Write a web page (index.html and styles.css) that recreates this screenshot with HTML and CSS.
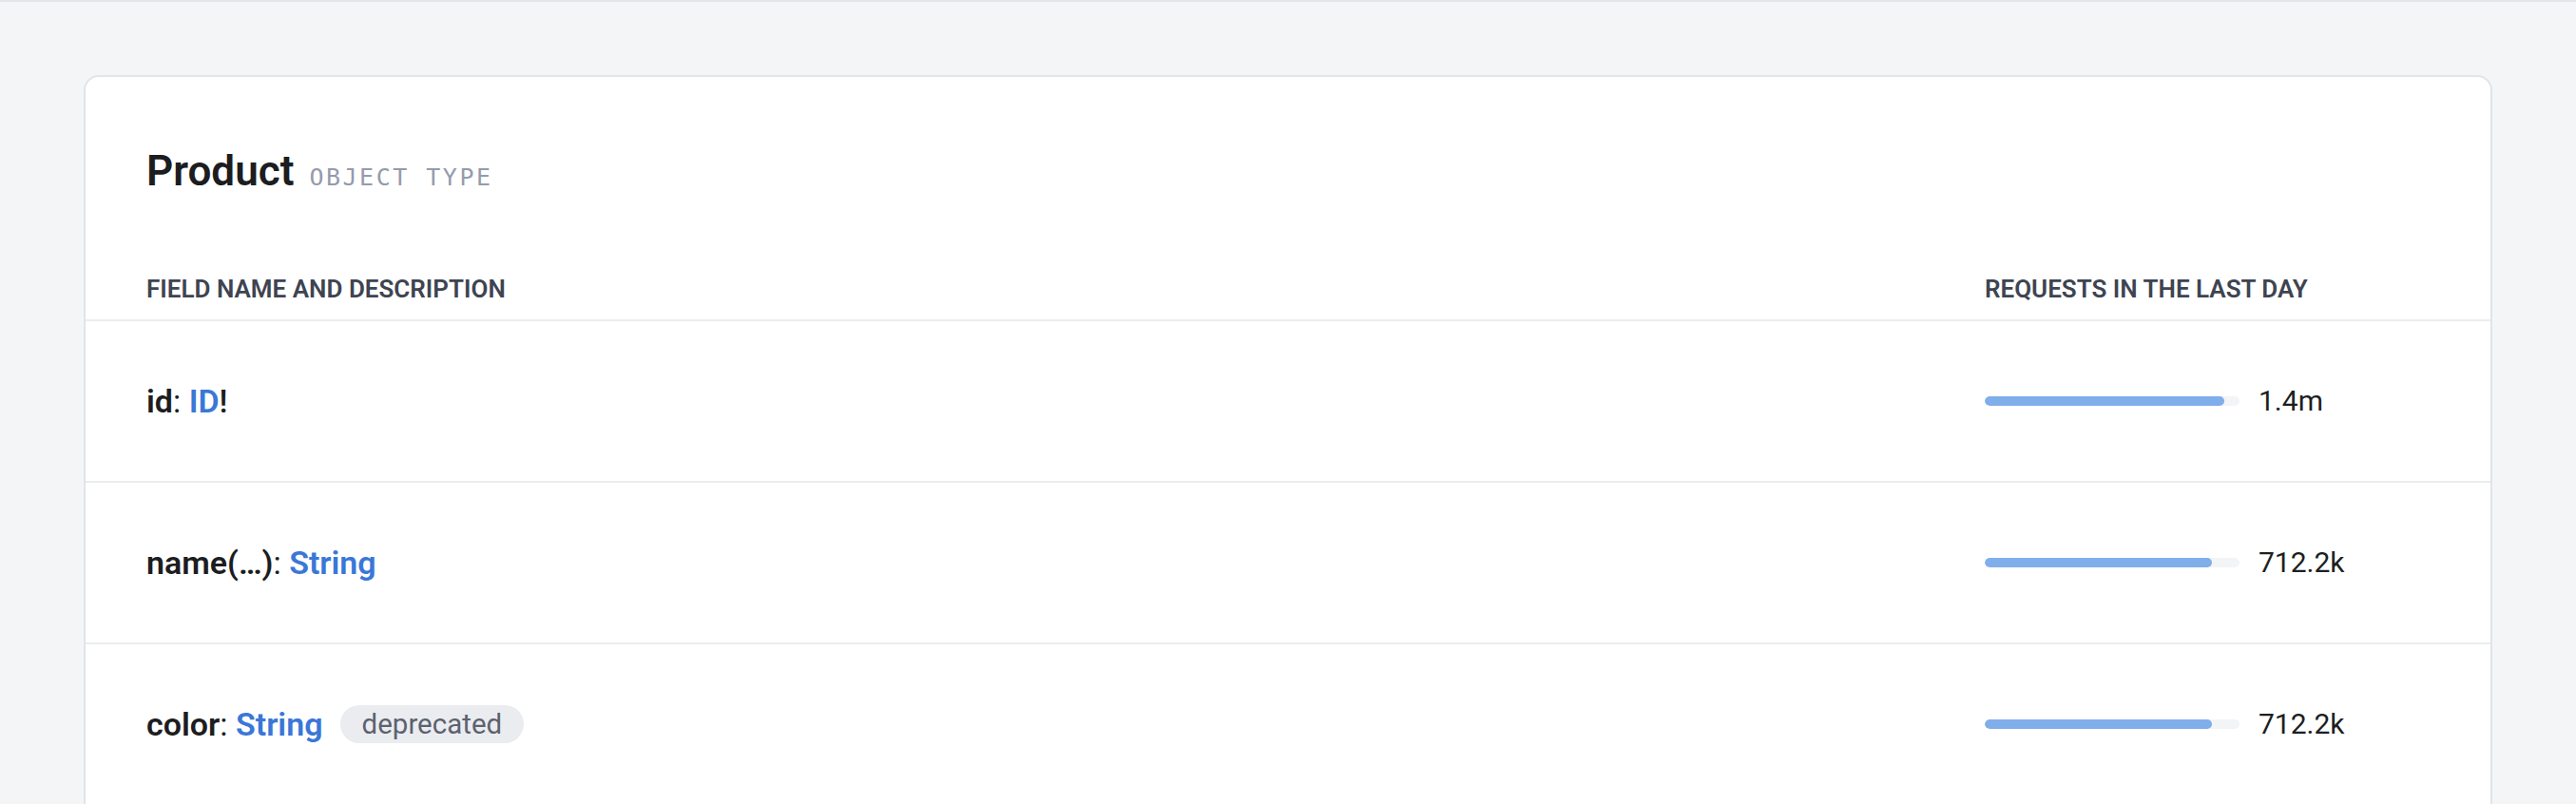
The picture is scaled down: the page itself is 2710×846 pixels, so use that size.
FILE: index.html
```html
<!DOCTYPE html>
<html>
<head>
<meta charset="utf-8">
<title>Product</title>
<link rel="stylesheet" href="styles.css">
</head>
<body>
<main class="page">
  <section class="card">
    <header class="card-head">
      <h1 class="type-name">Product</h1>
      <span class="type-kind">OBJECT TYPE</span>
    </header>
    <div class="table">
      <div class="row head-row">
        <div class="col-field">Field name and description</div>
        <div class="col-stat">Requests in the last day</div>
      </div>
      <div class="row">
        <div class="col-field"><span class="fname">id</span>: <span class="ftype">ID</span><span class="bang">!</span></div>
        <div class="col-stat"><div class="track"><div class="fill" style="width:94%"></div></div><span class="num">1.4m</span></div>
      </div>
      <div class="row">
        <div class="col-field"><span class="fname">name(…)</span>: <span class="ftype">String</span></div>
        <div class="col-stat"><div class="track"><div class="fill" style="width:89%"></div></div><span class="num">712.2k</span></div>
      </div>
      <div class="row">
        <div class="col-field"><span class="fname">color</span>: <span class="ftype">String</span><span class="badge">deprecated</span></div>
        <div class="col-stat"><div class="track"><div class="fill" style="width:89%"></div></div><span class="num">712.2k</span></div>
      </div>
    </div>
  </section>
</main>
</body>
</html>
```
FILE: styles.css
```css
html, body {
  margin: 0;
  padding: 0;
}
body {
  background: #f4f5f7;
  border-top: 2px solid #e3e5e9;
  font-family: Roboto, "Liberation Sans", sans-serif;
  color: #1c1d21;
  overflow: hidden;
}
.page {
  padding: 77px 88px 0;
}
.card {
  background: #ffffff;
  border: 2px solid #e3e4e8;
  border-radius: 16px;
  padding-bottom: 64px;
}
.card-head {
  display: flex;
  align-items: baseline;
  gap: 16px;
  padding: 73px 64px 0;
}
.type-name {
  margin: 0;
  font-size: 44px;
  line-height: 52px;
  font-weight: 600;
  color: #1c1d21;
}
.type-kind {
  font-family: "DejaVu Sans Mono", monospace;
  font-size: 25px;
  letter-spacing: 2.5px;
  color: #959bab;
}
.table {
  margin-top: 82px;
}
.row {
  display: grid;
  grid-template-columns: 1fr 468px;
  align-items: center;
  height: 168px;
  padding: 0 64px;
  border-bottom: 2px solid #ecedf0;
}
.head-row {
  height: auto;
  align-items: end;
  padding-bottom: 16px;
  font-size: 26px;
  line-height: 32px;
  font-weight: 600;
  text-transform: uppercase;
  color: #3e4451;
}
.row .col-field {
  display: flex;
  align-items: center;
  white-space: pre;
}
.row:not(.head-row) .col-field {
  font-size: 34px;
  line-height: 40px;
  color: #1c1d21;
}
.fname {
  font-weight: 600;
}
.ftype {
  font-weight: 600;
  color: #3a77d7;
}
.bang {
  font-weight: 500;
}
.badge {
  margin-left: 18px;
  height: 40px;
  padding: 0 23px;
  border-radius: 20px;
  background: #ebecf0;
  color: #5b6270;
  font-size: 29.5px;
  line-height: 40px;
  font-weight: 400;
}
.row:not(.head-row) .col-stat {
  display: flex;
  align-items: center;
  gap: 20px;
}
.track {
  width: 268px;
  height: 10px;
  border-radius: 5px;
  background: #f3f4f6;
  overflow: hidden;
}
.fill {
  height: 100%;
  border-radius: 5px;
  background: #80aeeb;
}
.num {
  font-size: 30px;
  line-height: 36px;
  color: #1d1f24;
}
```
